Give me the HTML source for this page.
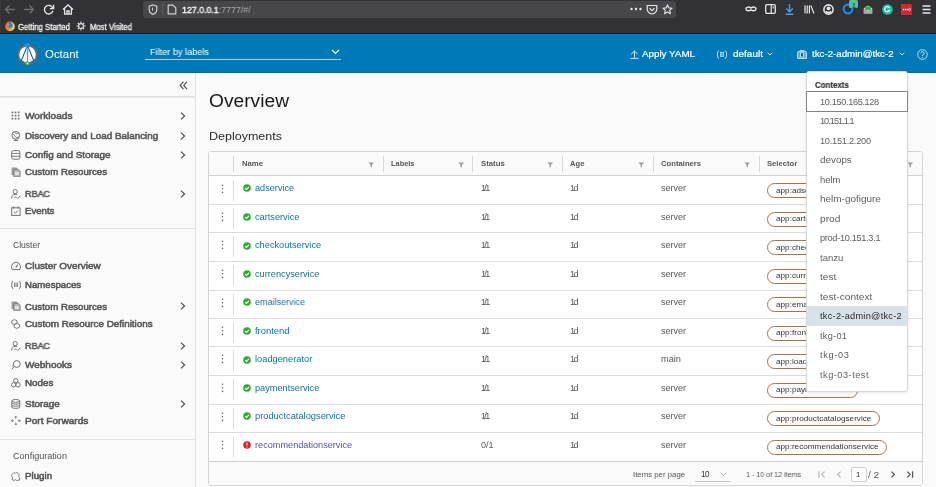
<!DOCTYPE html>
<html><head><meta charset="utf-8"><title>Octant</title>
<style>
html,body{margin:0;padding:0;}
body{width:936px;height:487px;overflow:hidden;position:relative;background:#fafafa;font-family:"Liberation Sans",sans-serif;}
.r{position:absolute;display:block;}
.t{position:absolute;white-space:nowrap;will-change:transform;}
</style></head><body>
<div class="r" style="left:0px;top:0px;width:936px;height:33px;background:#323234"></div>
<div class="r" style="left:0px;top:33px;width:936px;height:1px;background:#1c1b1f"></div>
<div class="r" style="left:0px;top:0px;width:1px;height:33px;background:#3b3b3d"></div>
<div class="r" style="left:143px;top:1px;width:533px;height:17px;background:#474749;border-radius:3px"></div>
<svg class="r" style="left:4px;top:4px;" width="12" height="11" viewBox="0 0 12 11"><path d="M11 5.5H1.5M5.5 1.5L1.5 5.5L5.5 9.5" fill="none" stroke="#6e6e70" stroke-width="1.3"/></svg>
<svg class="r" style="left:23px;top:4px;" width="12" height="11" viewBox="0 0 12 11"><path d="M1 5.5H10.5M6.5 1.5L10.5 5.5L6.5 9.5" fill="none" stroke="#6e6e70" stroke-width="1.3"/></svg>
<svg class="r" style="left:43px;top:4px;" width="12" height="11" viewBox="0 0 12 11"><path d="M9.8 4.2A4.3 4.3 0 1 0 9.9 6.8" fill="none" stroke="#e6e6e6" stroke-width="1.4"/><path d="M10.6 0.8V4.6H6.8" fill="none" stroke="#e6e6e6" stroke-width="1.4"/></svg>
<svg class="r" style="left:62px;top:4px;" width="12" height="11" viewBox="0 0 12 11"><path d="M1 5.6L6 1L11 5.6M2.6 4.3V10.2H9.4V4.3M5 10.2V7H7V10.2" fill="none" stroke="#e6e6e6" stroke-width="1.3"/></svg>
<svg class="r" style="left:148px;top:4px;" width="10" height="11" viewBox="0 0 10 11"><path d="M5 1L8.8 2.2V5.5C8.8 8 7 9.6 5 10.4C3 9.6 1.2 8 1.2 5.5V2.2Z" fill="none" stroke="#cfcfd0" stroke-width="1.2"/><path d="M5 3.2L4 4V6.4L5 6.8Z" fill="#cfcfd0"/></svg>
<div class="r" style="left:162px;top:3px;width:1px;height:12px;background:#5d5d60"></div>
<svg class="r" style="left:167px;top:4px;" width="10" height="11" viewBox="0 0 10 11"><path d="M1.2 1.2H6L8.8 4V9.8H1.2Z" fill="none" stroke="#cfcfd0" stroke-width="1.2" stroke-linejoin="round"/></svg>
<div class="t " style="left:181.50px;top:6.38px;font-size:9.0px;line-height:9.0px;color:#565656;transform:scaleX(0.9800);transform-origin:0 0;"><span style="color:#f9f9fa;-webkit-text-stroke:0.35px #f9f9fa">127.0.0.1</span><span style="color:#a8a8aa">:7777/#/</span></div>
<svg class="r" style="left:630px;top:7px;" width="12" height="4" viewBox="0 0 12 4"><circle cx="1.5" cy="2" r="1.2" fill="#e6e6e6"/><circle cx="6" cy="2" r="1.2" fill="#e6e6e6"/><circle cx="10.5" cy="2" r="1.2" fill="#e6e6e6"/></svg>
<svg class="r" style="left:646px;top:4px;" width="12" height="11" viewBox="0 0 12 11"><path d="M1.2 1.5H10.8V5A4.8 4.8 0 0 1 1.2 5Z" fill="none" stroke="#e6e6e6" stroke-width="1.2"/><path d="M3.6 4.3L6 6.6L8.4 4.3" fill="none" stroke="#e6e6e6" stroke-width="1.2"/></svg>
<svg class="r" style="left:662px;top:4px;" width="11" height="11" viewBox="0 0 11 11"><path d="M5.5 0.9L6.9 3.9L10.1 4.2L7.7 6.4L8.4 9.7L5.5 8L2.6 9.7L3.3 6.4L0.9 4.2L4.1 3.9Z" fill="none" stroke="#e6e6e6" stroke-width="1.1" stroke-linejoin="round"/></svg>
<svg class="r" style="left:745px;top:6px;" width="12" height="6" viewBox="0 0 12 6"><path d="M1 2.8C1 0.8 4 0.6 6 2C8 0.6 11 0.8 11 2.8C11 5 8 5.2 6 3.8C4 5.2 1 5 1 2.8Z" fill="none" stroke="#e6e6e6" stroke-width="1.5"/></svg>
<svg class="r" style="left:765px;top:4px;" width="11" height="10" viewBox="0 0 11 10"><rect x="0.7" y="0.7" width="9.6" height="8.6" rx="1.2" fill="none" stroke="#e6e6e6" stroke-width="1.3"/><path d="M6.2 0.7V9.3" stroke="#e6e6e6" stroke-width="1.2"/><path d="M8.2 2.2V4.6" stroke="#e6e6e6" stroke-width="1"/></svg>
<svg class="r" style="left:785px;top:4px;" width="9" height="11" viewBox="0 0 9 11"><path d="M4.5 0.3V7.6M1.2 4.4L4.5 7.7L7.8 4.4M0.5 10.2H8.5" fill="none" stroke="#38a3ff" stroke-width="1.4"/></svg>
<svg class="r" style="left:804px;top:5px;" width="11" height="9" viewBox="0 0 11 9"><path d="M1 0.5V8.5M3.2 0.5V8.5M5.4 0.5V8.5M6.8 0.6L10 8.5" fill="none" stroke="#e6e6e6" stroke-width="1.2"/></svg>
<svg class="r" style="left:823px;top:4px;" width="11" height="11" viewBox="0 0 11 11"><circle cx="5.5" cy="5.5" r="4.6" fill="none" stroke="#e6e6e6" stroke-width="1.6"/><circle cx="5.5" cy="4.3" r="1.9" fill="#e6e6e6"/><path d="M2.8 7.2C4 8.8 7 8.8 8.2 7.2" fill="none" stroke="#e6e6e6" stroke-width="1.5"/></svg>
<svg class="r" style="left:842px;top:3px;" width="12" height="12" viewBox="0 0 12 12"><circle cx="6" cy="6" r="4.4" fill="none" stroke="#1a8ae6" stroke-width="2.2"/></svg>
<div class="r" style="left:849px;top:0px;width:9px;height:8px;background:#54bf9e;border-radius:1.5px"></div>
<div class="t " style="left:852.00px;top:1.67px;font-size:7px;line-height:7px;color:#1f5c4c;font-weight:700;">1</div>
<svg class="r" style="left:863px;top:4px;" width="10" height="10" viewBox="0 0 10 10"><path d="M0.8 4.2L5 1.5L9.2 4.2V9.5H0.8Z" fill="#cfcfd0"/><path d="M2.2 2.5H7.8V6.2H2.2Z" fill="#2fb24b"/><path d="M0.8 5L5 7.6L9.2 5V9.5H0.8Z" fill="#a9a9ab"/></svg>
<svg class="r" style="left:882px;top:4px;" width="11" height="11" viewBox="0 0 11 11"><circle cx="5.5" cy="5.5" r="5.3" fill="#15c39a"/><path d="M7.4 3.8A2.6 2.6 0 1 0 7.6 6.4H5.8" fill="none" stroke="#ffffff" stroke-width="1.2"/></svg>
<div class="r" style="left:901px;top:4px;width:11px;height:11px;background:#d7262b;border-radius:1px"></div>
<svg class="r" style="left:902px;top:7px;" width="9" height="5" viewBox="0 0 9 5"><rect x="0.8" y="1.8" width="1.5" height="1.5" fill="#fff"/><rect x="3" y="1.8" width="1.5" height="1.5" fill="#fff"/><rect x="5.2" y="1.8" width="1.5" height="1.5" fill="#fff"/><path d="M7.6 0.8C8.3 1.6 8.3 3.4 7.6 4.2" stroke="#fff" stroke-width="0.8" fill="none"/></svg>
<svg class="r" style="left:922px;top:5px;" width="9" height="9" viewBox="0 0 9 9"><path d="M0.5 1H8.5M0.5 4.5H8.5M0.5 8H8.5" stroke="#e6e6e6" stroke-width="1.3"/></svg>
<svg class="r" style="left:5px;top:21px;" width="10" height="11" viewBox="0 0 10 11"><defs><linearGradient id="ffg" x1="0" y1="0" x2="1" y2="0.3"><stop offset="0" stop-color="#ff3a2a"/><stop offset="0.55" stop-color="#ff8a1a"/><stop offset="1" stop-color="#ffe226"/></linearGradient></defs><circle cx="4.9" cy="5.4" r="4.9" fill="url(#ffg)"/><circle cx="5.2" cy="4.6" r="2.6" fill="#1d8cf0"/><path d="M2 3.2C2.8 2.4 4 2.6 4.4 3.6C3.6 3.8 3.2 4.6 3.8 5.4C2.6 5.4 1.8 4.4 2 3.2Z" fill="#ff8a1a"/><path d="M3.6 1C4.6 0.2 6 0.4 6.6 0.8L5.4 2.2Z" fill="#1a6ef0"/></svg>
<div class="t " style="left:17.80px;top:24.06px;font-size:8.2px;line-height:8.2px;color:#f0f0f0;-webkit-text-stroke:0.3px #f0f0f0;transform:scaleX(0.9407);transform-origin:0 0;">Getting Started</div>
<svg class="r" style="left:76px;top:21px;" width="10" height="10" viewBox="0 0 10 10"><circle cx="5" cy="5" r="2.4" fill="none" stroke="#e6e6e6" stroke-width="1.1"/><path d="M5 0.5V2.2M5 7.8V9.5M0.5 5H2.2M7.8 5H9.5M1.8 1.8L3 3M7 7L8.2 8.2M1.8 8.2L3 7M7 3L8.2 1.8" stroke="#e6e6e6" stroke-width="1.1"/></svg>
<div class="t " style="left:89.70px;top:24.06px;font-size:8.2px;line-height:8.2px;color:#f0f0f0;-webkit-text-stroke:0.3px #f0f0f0;transform:scaleX(0.9429);transform-origin:0 0;">Most Visited</div>
<div class="r" style="left:0px;top:34px;width:936px;height:38px;background:#0079b8"></div>
<div class="r" style="left:0px;top:72px;width:936px;height:1px;background:#0069a5"></div>
<div class="r" style="left:0px;top:73px;width:936px;height:1px;background:#ffffff"></div>
<svg class="r" style="left:17px;top:43px;" width="22" height="23" viewBox="0 0 22 23"><circle cx="10.5" cy="11.7" r="9.2" fill="#ffffff" stroke="#6e6a68" stroke-width="1.9"/><path d="M10.5 2.5V20.3" stroke="#2aa0ea" stroke-width="1.1"/><path d="M10.5 2.5L4.3 17.6M10.5 2.5L16.7 17.6M4.3 17.6Q10.5 22.6 16.7 17.6" fill="none" stroke="#1d4fa7" stroke-width="1.1"/><path d="M10.5 2.5L7.6 19.8M10.5 2.5L13.4 19.8" fill="none" stroke="#b9d3ec" stroke-width="0.5"/><circle cx="10.5" cy="2.6" r="2.6" fill="#1e9be8"/><circle cx="10.5" cy="2.6" r="1.1" fill="#3c9a2a"/><circle cx="10.5" cy="20.3" r="2.1" fill="#3fbf2b"/><circle cx="10.5" cy="20.3" r="0.9" fill="#ffffff"/></svg>
<div class="t " style="left:45.30px;top:48.79px;font-size:11.0px;line-height:11.0px;color:#ffffff;transform:scaleX(1.0389);transform-origin:0 0;">Octant</div>
<div class="t " style="left:149.50px;top:47.27px;font-size:9.6px;line-height:9.6px;color:#ffffff;transform:scaleX(0.9531);transform-origin:0 0;">Filter by labels</div>
<div class="r" style="left:145px;top:59px;width:196px;height:1px;background:#a9d3ee"></div>
<svg class="r" style="left:331px;top:49px;" width="9" height="6" viewBox="0 0 9 6"><path d="M1 1L4.5 4.5L8 1" fill="none" stroke="#ffffff" stroke-width="1.2"/></svg>
<svg class="r" style="left:630px;top:50px;" width="9" height="10" viewBox="0 0 9 10"><path d="M4.5 7.8V1M1.2 4.2L4.5 1L7.8 4.2M0.5 8.4H8.5" fill="none" stroke="#d5e9f5" stroke-width="1"/></svg>
<div class="t " style="left:642.20px;top:50.11px;font-size:9.2px;line-height:9.2px;color:#ffffff;-webkit-text-stroke:0.2px #fff;transform:scaleX(1.0667);transform-origin:0 0;">Apply YAML</div>
<svg class="r" style="left:716px;top:50px;" width="12" height="10" viewBox="0 0 12 10"><path d="M2.6 0.6C1 2.4 1 6.8 2.6 8.6M9.4 0.6C11 2.4 11 6.8 9.4 8.6" fill="none" stroke="#cfe6f4" stroke-width="1"/><rect x="4" y="2" width="4" height="4.8" fill="#cfe6f4"/><path d="M4 3.6H8M4 5.2H8M6 2V6.8" stroke="#0079b8" stroke-width="0.55"/></svg>
<div class="t " style="left:732.80px;top:50.11px;font-size:9.2px;line-height:9.2px;color:#ffffff;-webkit-text-stroke:0.2px #fff;transform:scaleX(1.0842);transform-origin:0 0;">default</div>
<svg class="r" style="left:767px;top:52px;" width="6" height="4" viewBox="0 0 6 4"><path d="M0.7 0.8L3 3L5.3 0.8" fill="none" stroke="#ffffff" stroke-width="0.9"/></svg>
<svg class="r" style="left:797px;top:50px;" width="10" height="9" viewBox="0 0 10 9"><path d="M0.6 8.4V2.8Q0.6 1.2 2.2 1.2H7.8Q9.4 1.2 9.4 2.8V8.4Z" fill="#5fa8d3" stroke="#cfe6f4" stroke-width="1"/><path d="M3.4 1.2V0.5H6.6V1.2" fill="none" stroke="#cfe6f4" stroke-width="0.9"/><rect x="3.6" y="2.8" width="2.8" height="4.2" fill="#0a6aa3" stroke="#cfe6f4" stroke-width="0.8"/></svg>
<div class="t " style="left:812.40px;top:50.11px;font-size:9.2px;line-height:9.2px;color:#ffffff;-webkit-text-stroke:0.2px #fff;transform:scaleX(1.0565);transform-origin:0 0;">tkc-2-admin@tkc-2</div>
<svg class="r" style="left:899px;top:52px;" width="6" height="4" viewBox="0 0 6 4"><path d="M0.7 0.8L3 3L5.3 0.8" fill="none" stroke="#ffffff" stroke-width="0.9"/></svg>
<svg class="r" style="left:917px;top:49px;" width="11" height="11" viewBox="0 0 11 11"><circle cx="5.5" cy="5.5" r="4.8" fill="none" stroke="#d5e9f5" stroke-width="0.9"/><path d="M3.9 4.3A1.6 1.6 0 1 1 5.5 5.9V6.9" fill="none" stroke="#d5e9f5" stroke-width="0.9"/><circle cx="5.5" cy="8.3" r="0.55" fill="#d5e9f5"/></svg>
<div class="r" style="left:0px;top:74px;width:195px;height:413px;background:#fafafa"></div>
<div class="r" style="left:195px;top:74px;width:1px;height:413px;background:#e0e0e0"></div>
<div class="r" style="left:0px;top:96px;width:195px;height:1px;background:#dedede"></div>
<div class="r" style="left:0px;top:97px;width:195px;height:1px;background:#ececec"></div>
<svg class="r" style="left:179px;top:81px;" width="9" height="9" viewBox="0 0 9 9"><path d="M4.4 0.7L1.2 4.4L4.4 8.1M8 0.7L4.8 4.4L8 8.1" fill="none" stroke="#4a4a4a" stroke-width="1.15"/></svg>
<svg class="r" style="left:11px;top:111px;" width="10" height="10" viewBox="0 0 10 10"><rect x="0.6" y="0.6" width="1.7" height="1.7" fill="#727272"/><rect x="0.6" y="3.7" width="1.7" height="1.7" fill="#727272"/><rect x="0.6" y="6.8" width="1.7" height="1.7" fill="#727272"/><rect x="3.7" y="0.6" width="1.7" height="1.7" fill="#727272"/><rect x="3.7" y="3.7" width="1.7" height="1.7" fill="#727272"/><rect x="3.7" y="6.8" width="1.7" height="1.7" fill="#727272"/><rect x="6.8" y="0.6" width="1.7" height="1.7" fill="#727272"/><rect x="6.8" y="3.7" width="1.7" height="1.7" fill="#727272"/><rect x="6.8" y="6.8" width="1.7" height="1.7" fill="#727272"/></svg>
<div class="t " style="left:24.80px;top:112.03px;font-size:9.3px;line-height:9.3px;color:#575757;-webkit-text-stroke:0.55px #575757;transform:scaleX(1.0853);transform-origin:0 0;">Workloads</div>
<svg class="r" style="left:180px;top:112px;" width="6" height="8" viewBox="0 0 6 8"><path d="M1 0.7L4.6 4L1 7.3" fill="none" stroke="#4a4a4a" stroke-width="1.1"/></svg>
<svg class="r" style="left:11px;top:131px;" width="10" height="10" viewBox="0 0 10 10"><circle cx="4.8" cy="4.3" r="3.9" fill="none" stroke="#727272" stroke-width="1"/><path d="M1.6 2.6C3 3.6 3.6 4.6 4.4 5.8C5.2 6.8 6.6 6.9 8.4 5.6M3.4 1C4 2.2 5.6 3.2 7.8 2.4" fill="none" stroke="#727272" stroke-width="0.9"/><path d="M2.5 9.4H7.1M4.8 8.2V9.4" stroke="#727272" stroke-width="1"/></svg>
<div class="t " style="left:24.80px;top:131.73px;font-size:9.3px;line-height:9.3px;color:#575757;-webkit-text-stroke:0.55px #575757;transform:scaleX(1.0611);transform-origin:0 0;">Discovery and Load Balancing</div>
<svg class="r" style="left:180px;top:132px;" width="6" height="8" viewBox="0 0 6 8"><path d="M1 0.7L4.6 4L1 7.3" fill="none" stroke="#4a4a4a" stroke-width="1.1"/></svg>
<svg class="r" style="left:11px;top:150px;" width="10" height="10" viewBox="0 0 10 10"><rect x="0.7" y="0.6" width="8.2" height="8.6" rx="1.8" fill="none" stroke="#727272" stroke-width="1"/><path d="M0.7 3.4H8.9M0.7 6.3H8.9" stroke="#727272" stroke-width="0.9"/></svg>
<div class="t " style="left:24.80px;top:150.93px;font-size:9.3px;line-height:9.3px;color:#575757;-webkit-text-stroke:0.55px #575757;transform:scaleX(1.0673);transform-origin:0 0;">Config and Storage</div>
<svg class="r" style="left:180px;top:151px;" width="6" height="8" viewBox="0 0 6 8"><path d="M1 0.7L4.6 4L1 7.3" fill="none" stroke="#4a4a4a" stroke-width="1.1"/></svg>
<svg class="r" style="left:11px;top:167px;" width="10" height="10" viewBox="0 0 10 10"><path d="M0.6 0.6H5.4L6.8 2V8H0.6Z" fill="#9a9a9a"/><path d="M2.6 2.4H7.4L9.2 4.2V9.6H2.6Z" fill="#b4b4b4" stroke="#727272" stroke-width="0.7"/><rect x="4" y="5" width="3.8" height="3" fill="#e2e2e2"/></svg>
<div class="t " style="left:24.80px;top:168.33px;font-size:9.3px;line-height:9.3px;color:#575757;-webkit-text-stroke:0.55px #575757;transform:scaleX(1.0380);transform-origin:0 0;">Custom Resources</div>
<svg class="r" style="left:11px;top:189px;" width="10" height="10" viewBox="0 0 10 10"><circle cx="4.2" cy="2.6" r="2.1" fill="none" stroke="#727272" stroke-width="1"/><path d="M0.6 9.4C0.6 6.6 2.3 5.4 4.2 5.4C5 5.4 5.7 5.6 6.2 6" fill="none" stroke="#727272" stroke-width="1"/><path d="M3.2 9.2C3.8 7.6 5 7.6 5.6 8.6C6.2 9.6 7.4 9.6 8 8L9.4 6.8" fill="none" stroke="#727272" stroke-width="0.9"/></svg>
<div class="t " style="left:24.80px;top:189.93px;font-size:9.3px;line-height:9.3px;color:#575757;-webkit-text-stroke:0.55px #575757;transform:scaleX(0.9712);transform-origin:0 0;">RBAC</div>
<svg class="r" style="left:180px;top:190px;" width="6" height="8" viewBox="0 0 6 8"><path d="M1 0.7L4.6 4L1 7.3" fill="none" stroke="#4a4a4a" stroke-width="1.1"/></svg>
<svg class="r" style="left:11px;top:206px;" width="10" height="10" viewBox="0 0 10 10"><rect x="0.7" y="1.8" width="8.4" height="7.6" fill="none" stroke="#727272" stroke-width="1"/><path d="M2.8 0.3V2.8M7 0.3V2.8M3 5.8L4.4 7.2L6.9 4.6" fill="none" stroke="#727272" stroke-width="1"/></svg>
<div class="t " style="left:24.80px;top:207.43px;font-size:9.3px;line-height:9.3px;color:#575757;-webkit-text-stroke:0.55px #575757;transform:scaleX(1.0338);transform-origin:0 0;">Events</div>
<svg class="r" style="left:11px;top:261px;" width="10" height="10" viewBox="0 0 10 10"><path d="M1.3 8.6A4.6 4.6 0 1 1 8.7 8.6Z" fill="none" stroke="#727272" stroke-width="1"/><path d="M4.8 6.4L6.8 3.6" stroke="#727272" stroke-width="1.1"/></svg>
<div class="t " style="left:24.80px;top:262.03px;font-size:9.3px;line-height:9.3px;color:#575757;-webkit-text-stroke:0.55px #575757;transform:scaleX(1.0693);transform-origin:0 0;">Cluster Overview</div>
<svg class="r" style="left:11px;top:280px;" width="10" height="10" viewBox="0 0 10 10"><path d="M1.8 0.8C0.3 2.6 0.3 7 1.8 8.8M8.4 0.8C9.9 2.6 9.9 7 8.4 8.8" fill="none" stroke="#727272" stroke-width="1"/><path d="M3.6 2.6V7M5.1 2.6V7M6.6 2.6V7" stroke="#727272" stroke-width="0.9"/></svg>
<div class="t " style="left:24.80px;top:281.23px;font-size:9.3px;line-height:9.3px;color:#575757;-webkit-text-stroke:0.55px #575757;transform:scaleX(1.0351);transform-origin:0 0;">Namespaces</div>
<svg class="r" style="left:11px;top:301px;" width="10" height="10" viewBox="0 0 10 10"><path d="M0.6 0.6H5.4L6.8 2V8H0.6Z" fill="#9a9a9a"/><path d="M2.6 2.4H7.4L9.2 4.2V9.6H2.6Z" fill="#b4b4b4" stroke="#727272" stroke-width="0.7"/><rect x="4" y="5" width="3.8" height="3" fill="#e2e2e2"/></svg>
<div class="t " style="left:24.80px;top:302.53px;font-size:9.3px;line-height:9.3px;color:#575757;-webkit-text-stroke:0.55px #575757;transform:scaleX(1.0380);transform-origin:0 0;">Custom Resources</div>
<svg class="r" style="left:180px;top:302px;" width="6" height="8" viewBox="0 0 6 8"><path d="M1 0.7L4.6 4L1 7.3" fill="none" stroke="#4a4a4a" stroke-width="1.1"/></svg>
<svg class="r" style="left:11px;top:319px;" width="10" height="10" viewBox="0 0 10 10"><path d="M3.4 0.6L6 1.8V4.4L3.4 5.6L0.8 4.4V1.8Z" fill="none" stroke="#727272" stroke-width="0.9"/><path d="M5.8 4.4L8.6 5.6V8.2L5.8 9.4L3.2 8.2V5.6Z" fill="none" stroke="#727272" stroke-width="0.9"/></svg>
<div class="t " style="left:24.80px;top:319.93px;font-size:9.3px;line-height:9.3px;color:#575757;-webkit-text-stroke:0.55px #575757;transform:scaleX(1.0604);transform-origin:0 0;">Custom Resource Definitions</div>
<svg class="r" style="left:11px;top:341px;" width="10" height="10" viewBox="0 0 10 10"><circle cx="4.2" cy="2.6" r="2.1" fill="none" stroke="#727272" stroke-width="1"/><path d="M0.6 9.4C0.6 6.6 2.3 5.4 4.2 5.4C5 5.4 5.7 5.6 6.2 6" fill="none" stroke="#727272" stroke-width="1"/><path d="M3.2 9.2C3.8 7.6 5 7.6 5.6 8.6C6.2 9.6 7.4 9.6 8 8L9.4 6.8" fill="none" stroke="#727272" stroke-width="0.9"/></svg>
<div class="t " style="left:24.80px;top:342.03px;font-size:9.3px;line-height:9.3px;color:#575757;-webkit-text-stroke:0.55px #575757;transform:scaleX(0.9712);transform-origin:0 0;">RBAC</div>
<svg class="r" style="left:180px;top:342px;" width="6" height="8" viewBox="0 0 6 8"><path d="M1 0.7L4.6 4L1 7.3" fill="none" stroke="#4a4a4a" stroke-width="1.1"/></svg>
<svg class="r" style="left:11px;top:360px;" width="10" height="10" viewBox="0 0 10 10"><circle cx="5.8" cy="4" r="3.4" fill="none" stroke="#727272" stroke-width="1"/><path d="M3.4 6.4L0.8 9.4M2.6 5L1.2 6.6" fill="none" stroke="#727272" stroke-width="1"/></svg>
<div class="t " style="left:24.80px;top:361.23px;font-size:9.3px;line-height:9.3px;color:#575757;-webkit-text-stroke:0.55px #575757;transform:scaleX(1.0735);transform-origin:0 0;">Webhooks</div>
<svg class="r" style="left:180px;top:361px;" width="6" height="8" viewBox="0 0 6 8"><path d="M1 0.7L4.6 4L1 7.3" fill="none" stroke="#4a4a4a" stroke-width="1.1"/></svg>
<svg class="r" style="left:11px;top:378px;" width="10" height="10" viewBox="0 0 10 10"><circle cx="4.8" cy="2.7" r="2.2" fill="none" stroke="#727272" stroke-width="1"/><circle cx="2.6" cy="6.8" r="2.2" fill="none" stroke="#727272" stroke-width="1"/><circle cx="7" cy="6.8" r="2.2" fill="none" stroke="#727272" stroke-width="1"/></svg>
<div class="t " style="left:24.80px;top:378.93px;font-size:9.3px;line-height:9.3px;color:#575757;-webkit-text-stroke:0.55px #575757;transform:scaleX(1.0561);transform-origin:0 0;">Nodes</div>
<svg class="r" style="left:11px;top:399px;" width="10" height="10" viewBox="0 0 10 10"><ellipse cx="4.8" cy="1.9" rx="4" ry="1.4" fill="none" stroke="#727272" stroke-width="1"/><path d="M0.8 1.9V8.2C0.8 9.7 8.8 9.7 8.8 8.2V1.9M0.8 4C0.8 5.5 8.8 5.5 8.8 4M0.8 6.1C0.8 7.6 8.8 7.6 8.8 6.1" fill="none" stroke="#727272" stroke-width="1"/></svg>
<div class="t " style="left:24.80px;top:400.33px;font-size:9.3px;line-height:9.3px;color:#575757;-webkit-text-stroke:0.55px #575757;transform:scaleX(1.0718);transform-origin:0 0;">Storage</div>
<svg class="r" style="left:180px;top:400px;" width="6" height="8" viewBox="0 0 6 8"><path d="M1 0.7L4.6 4L1 7.3" fill="none" stroke="#4a4a4a" stroke-width="1.1"/></svg>
<svg class="r" style="left:11px;top:416px;" width="10" height="10" viewBox="0 0 10 10"><path d="M4.8 0.4V2.8M4.8 6.6V9M0.4 4.7H2.8M6.8 4.7H9.2M3.6 1.6L4.8 0.4L6 1.6M3.6 7.8L4.8 9L6 7.8M1.6 3.5L0.4 4.7L1.6 5.9M8 3.5L9.2 4.7L8 5.9" fill="none" stroke="#727272" stroke-width="0.9"/></svg>
<div class="t " style="left:24.80px;top:417.33px;font-size:9.3px;line-height:9.3px;color:#575757;-webkit-text-stroke:0.55px #575757;transform:scaleX(1.0844);transform-origin:0 0;">Port Forwards</div>
<svg class="r" style="left:11px;top:471px;" width="10" height="10" viewBox="0 0 10 10"><path d="M1 3.6L3.2 1.4L4.4 2.4C5 1.2 6.6 1.2 7 2.4L8.4 3.8C7.4 4.6 7.4 5.8 8.4 6.6L9 8.8L5.6 9.6C5.4 8.4 3.8 8.4 3.4 9.4L1.2 8.8L1.6 6.4C0.4 6 0.4 4.4 1 3.6Z" fill="none" stroke="#727272" stroke-width="0.9"/></svg>
<div class="t " style="left:24.80px;top:472.33px;font-size:9.3px;line-height:9.3px;color:#575757;-webkit-text-stroke:0.55px #575757;transform:scaleX(1.0486);transform-origin:0 0;">Plugin</div>
<div class="r" style="left:0px;top:228px;width:195px;height:1px;background:#e3e3e3"></div>
<div class="t " style="left:13.10px;top:241.47px;font-size:8.3px;line-height:8.3px;color:#505050;transform:scaleX(1.0312);transform-origin:0 0;">Cluster</div>
<div class="r" style="left:0px;top:439px;width:195px;height:1px;background:#e3e3e3"></div>
<div class="t " style="left:13.10px;top:451.87px;font-size:8.3px;line-height:8.3px;color:#505050;transform:scaleX(1.0927);transform-origin:0 0;">Configuration</div>
<div class="t " style="left:208.90px;top:93.00px;font-size:17.6px;line-height:17.6px;color:#1a1a1a;transform:scaleX(1.0912);transform-origin:0 0;">Overview</div>
<div class="t " style="left:208.90px;top:130.61px;font-size:11.8px;line-height:11.8px;color:#2a2a2a;transform:scaleX(1.0599);transform-origin:0 0;">Deployments</div>
<div class="r" style="left:208px;top:151px;width:715px;height:335px;background:#ffffff;border:1px solid #d4d4d4;border-radius:3px;box-sizing:border-box"></div>
<div class="r" style="left:209px;top:152px;width:713px;height:23px;background:#fafafa"></div>
<div class="r" style="left:209px;top:175px;width:713px;height:1px;background:#d0d0d0"></div>
<div class="r" style="left:233px;top:156px;width:1px;height:16px;background:#d9d9d9"></div>
<div class="r" style="left:383px;top:156px;width:1px;height:16px;background:#d9d9d9"></div>
<div class="r" style="left:472px;top:156px;width:1px;height:16px;background:#d9d9d9"></div>
<div class="r" style="left:562px;top:156px;width:1px;height:16px;background:#d9d9d9"></div>
<div class="r" style="left:653px;top:156px;width:1px;height:16px;background:#d9d9d9"></div>
<div class="r" style="left:759px;top:156px;width:1px;height:16px;background:#d9d9d9"></div>
<div class="t " style="left:241.90px;top:160.22px;font-size:7.3px;line-height:7.3px;color:#565656;font-weight:700;transform:scaleX(1.0566);transform-origin:0 0;">Name</div>
<svg class="r" style="left:368px;top:162px;" width="7" height="6" viewBox="0 0 7 6"><path d="M0.3 0.4H6.2L3.9 2.8V5.2H2.6V2.8Z" fill="#9a9a9a"/></svg>
<div class="t " style="left:391.40px;top:160.22px;font-size:7.3px;line-height:7.3px;color:#565656;font-weight:700;transform:scaleX(1.0162);transform-origin:0 0;">Labels</div>
<svg class="r" style="left:458px;top:162px;" width="7" height="6" viewBox="0 0 7 6"><path d="M0.3 0.4H6.2L3.9 2.8V5.2H2.6V2.8Z" fill="#9a9a9a"/></svg>
<div class="t " style="left:480.60px;top:160.22px;font-size:7.3px;line-height:7.3px;color:#565656;font-weight:700;transform:scaleX(1.0622);transform-origin:0 0;">Status</div>
<svg class="r" style="left:547px;top:162px;" width="7" height="6" viewBox="0 0 7 6"><path d="M0.3 0.4H6.2L3.9 2.8V5.2H2.6V2.8Z" fill="#9a9a9a"/></svg>
<div class="t " style="left:570.00px;top:160.22px;font-size:7.3px;line-height:7.3px;color:#565656;font-weight:700;transform:scaleX(1.0449);transform-origin:0 0;">Age</div>
<svg class="r" style="left:638px;top:162px;" width="7" height="6" viewBox="0 0 7 6"><path d="M0.3 0.4H6.2L3.9 2.8V5.2H2.6V2.8Z" fill="#9a9a9a"/></svg>
<div class="t " style="left:660.70px;top:160.22px;font-size:7.3px;line-height:7.3px;color:#565656;font-weight:700;transform:scaleX(1.0518);transform-origin:0 0;">Containers</div>
<svg class="r" style="left:744px;top:162px;" width="7" height="6" viewBox="0 0 7 6"><path d="M0.3 0.4H6.2L3.9 2.8V5.2H2.6V2.8Z" fill="#9a9a9a"/></svg>
<div class="t " style="left:766.80px;top:160.22px;font-size:7.3px;line-height:7.3px;color:#565656;font-weight:700;transform:scaleX(1.0482);transform-origin:0 0;">Selector</div>
<svg class="r" style="left:907px;top:162px;" width="7" height="6" viewBox="0 0 7 6"><path d="M0.3 0.4H6.2L3.9 2.8V5.2H2.6V2.8Z" fill="#9a9a9a"/></svg>
<div class="r" style="left:233px;top:180px;width:1px;height:21px;background:#dcdcdc"></div>
<svg class="r" style="left:221px;top:184px;" width="3" height="10" viewBox="0 0 3 10"><circle cx="1.5" cy="1.2" r="0.8" fill="#666"/><circle cx="1.5" cy="4.8" r="0.8" fill="#666"/><circle cx="1.5" cy="8.4" r="0.8" fill="#666"/></svg>
<svg class="r" style="left:243px;top:184px;" width="8" height="8" viewBox="0 0 8 8"><circle cx="4" cy="4" r="3.8" fill="#2cae2c"/><path d="M2.2 4.1L3.5 5.4L5.9 2.8" fill="none" stroke="#fff" stroke-width="1.25"/></svg>
<div class="t " style="left:254.80px;top:184.10px;font-size:9.1px;line-height:9.1px;color:#0a72ad;transform:scaleX(1.0067);transform-origin:0 0;">adservice</div>
<div class="t " style="left:481.00px;top:184.18px;font-size:9.0px;line-height:9.0px;color:#565656;letter-spacing:-1.650px;">1/1</div>
<div class="t " style="left:569.50px;top:184.18px;font-size:9.0px;line-height:9.0px;color:#565656;letter-spacing:-1.400px;">1d</div>
<div class="t " style="left:661.20px;top:184.18px;font-size:9.0px;line-height:9.0px;color:#565656;transform:scaleX(1.0000);transform-origin:0 0;">server</div>
<div class="r" style="left:766.5px;top:183px;width:68.9px;height:14.5px;border:1px solid #a67250;border-radius:8px;box-sizing:border-box;background:#fff"></div>
<div class="t " style="left:775.60px;top:186.68px;font-size:7.7px;line-height:7.7px;color:#333333;transform:scaleX(1.0629);transform-origin:0 0;">app:adservice</div>
<div class="r" style="left:209px;top:204px;width:713px;height:1px;background:#dcdcdc"></div>
<div class="r" style="left:233px;top:208px;width:1px;height:21px;background:#dcdcdc"></div>
<svg class="r" style="left:221px;top:212px;" width="3" height="10" viewBox="0 0 3 10"><circle cx="1.5" cy="1.2" r="0.8" fill="#666"/><circle cx="1.5" cy="4.8" r="0.8" fill="#666"/><circle cx="1.5" cy="8.4" r="0.8" fill="#666"/></svg>
<svg class="r" style="left:243px;top:213px;" width="8" height="8" viewBox="0 0 8 8"><circle cx="4" cy="4" r="3.8" fill="#2cae2c"/><path d="M2.2 4.1L3.5 5.4L5.9 2.8" fill="none" stroke="#fff" stroke-width="1.25"/></svg>
<div class="t " style="left:254.80px;top:212.60px;font-size:9.1px;line-height:9.1px;color:#0a72ad;transform:scaleX(1.0117);transform-origin:0 0;">cartservice</div>
<div class="t " style="left:481.00px;top:212.68px;font-size:9.0px;line-height:9.0px;color:#565656;letter-spacing:-1.650px;">1/1</div>
<div class="t " style="left:569.50px;top:212.68px;font-size:9.0px;line-height:9.0px;color:#565656;letter-spacing:-1.400px;">1d</div>
<div class="t " style="left:661.20px;top:212.68px;font-size:9.0px;line-height:9.0px;color:#565656;transform:scaleX(1.0000);transform-origin:0 0;">server</div>
<div class="r" style="left:766.5px;top:212px;width:73.5px;height:14.5px;border:1px solid #a67250;border-radius:8px;box-sizing:border-box;background:#fff"></div>
<div class="t " style="left:775.60px;top:215.18px;font-size:7.7px;line-height:7.7px;color:#333333;transform:scaleX(1.0632);transform-origin:0 0;">app:cartservice</div>
<div class="r" style="left:209px;top:232px;width:713px;height:1px;background:#dcdcdc"></div>
<div class="r" style="left:233px;top:236px;width:1px;height:21px;background:#dcdcdc"></div>
<svg class="r" style="left:221px;top:240px;" width="3" height="10" viewBox="0 0 3 10"><circle cx="1.5" cy="1.2" r="0.8" fill="#666"/><circle cx="1.5" cy="4.8" r="0.8" fill="#666"/><circle cx="1.5" cy="8.4" r="0.8" fill="#666"/></svg>
<svg class="r" style="left:243px;top:242px;" width="8" height="8" viewBox="0 0 8 8"><circle cx="4" cy="4" r="3.8" fill="#2cae2c"/><path d="M2.2 4.1L3.5 5.4L5.9 2.8" fill="none" stroke="#fff" stroke-width="1.25"/></svg>
<div class="t " style="left:254.80px;top:241.10px;font-size:9.1px;line-height:9.1px;color:#0a72ad;transform:scaleX(1.0148);transform-origin:0 0;">checkoutservice</div>
<div class="t " style="left:481.00px;top:241.18px;font-size:9.0px;line-height:9.0px;color:#565656;letter-spacing:-1.650px;">1/1</div>
<div class="t " style="left:569.50px;top:241.18px;font-size:9.0px;line-height:9.0px;color:#565656;letter-spacing:-1.400px;">1d</div>
<div class="t " style="left:661.20px;top:241.18px;font-size:9.0px;line-height:9.0px;color:#565656;transform:scaleX(1.0000);transform-origin:0 0;">server</div>
<div class="r" style="left:766.5px;top:240px;width:92.6px;height:14.5px;border:1px solid #a67250;border-radius:8px;box-sizing:border-box;background:#fff"></div>
<div class="t " style="left:775.60px;top:243.68px;font-size:7.7px;line-height:7.7px;color:#333333;transform:scaleX(1.0633);transform-origin:0 0;">app:checkoutservice</div>
<div class="r" style="left:209px;top:261px;width:713px;height:1px;background:#dcdcdc"></div>
<div class="r" style="left:233px;top:265px;width:1px;height:21px;background:#dcdcdc"></div>
<svg class="r" style="left:221px;top:269px;" width="3" height="10" viewBox="0 0 3 10"><circle cx="1.5" cy="1.2" r="0.8" fill="#666"/><circle cx="1.5" cy="4.8" r="0.8" fill="#666"/><circle cx="1.5" cy="8.4" r="0.8" fill="#666"/></svg>
<svg class="r" style="left:243px;top:270px;" width="8" height="8" viewBox="0 0 8 8"><circle cx="4" cy="4" r="3.8" fill="#2cae2c"/><path d="M2.2 4.1L3.5 5.4L5.9 2.8" fill="none" stroke="#fff" stroke-width="1.25"/></svg>
<div class="t " style="left:254.80px;top:269.60px;font-size:9.1px;line-height:9.1px;color:#0a72ad;transform:scaleX(1.0109);transform-origin:0 0;">currencyservice</div>
<div class="t " style="left:481.00px;top:269.68px;font-size:9.0px;line-height:9.0px;color:#565656;letter-spacing:-1.650px;">1/1</div>
<div class="t " style="left:569.50px;top:269.68px;font-size:9.0px;line-height:9.0px;color:#565656;letter-spacing:-1.400px;">1d</div>
<div class="t " style="left:661.20px;top:269.68px;font-size:9.0px;line-height:9.0px;color:#565656;transform:scaleX(1.0000);transform-origin:0 0;">server</div>
<div class="r" style="left:766.5px;top:269px;width:91.2px;height:14.5px;border:1px solid #a67250;border-radius:8px;box-sizing:border-box;background:#fff"></div>
<div class="t " style="left:775.60px;top:272.18px;font-size:7.7px;line-height:7.7px;color:#333333;transform:scaleX(1.0631);transform-origin:0 0;">app:currencyservice</div>
<div class="r" style="left:209px;top:290px;width:713px;height:1px;background:#dcdcdc"></div>
<div class="r" style="left:233px;top:294px;width:1px;height:21px;background:#dcdcdc"></div>
<svg class="r" style="left:221px;top:298px;" width="3" height="10" viewBox="0 0 3 10"><circle cx="1.5" cy="1.2" r="0.8" fill="#666"/><circle cx="1.5" cy="4.8" r="0.8" fill="#666"/><circle cx="1.5" cy="8.4" r="0.8" fill="#666"/></svg>
<svg class="r" style="left:243px;top:298px;" width="8" height="8" viewBox="0 0 8 8"><circle cx="4" cy="4" r="3.8" fill="#2cae2c"/><path d="M2.2 4.1L3.5 5.4L5.9 2.8" fill="none" stroke="#fff" stroke-width="1.25"/></svg>
<div class="t " style="left:254.80px;top:298.10px;font-size:9.1px;line-height:9.1px;color:#0a72ad;transform:scaleX(0.9892);transform-origin:0 0;">emailservice</div>
<div class="t " style="left:481.00px;top:298.18px;font-size:9.0px;line-height:9.0px;color:#565656;letter-spacing:-1.650px;">1/1</div>
<div class="t " style="left:569.50px;top:298.18px;font-size:9.0px;line-height:9.0px;color:#565656;letter-spacing:-1.400px;">1d</div>
<div class="t " style="left:661.20px;top:298.18px;font-size:9.0px;line-height:9.0px;color:#565656;transform:scaleX(1.0000);transform-origin:0 0;">server</div>
<div class="r" style="left:766.5px;top:297px;width:79.4px;height:14.5px;border:1px solid #a67250;border-radius:8px;box-sizing:border-box;background:#fff"></div>
<div class="t " style="left:775.60px;top:300.68px;font-size:7.7px;line-height:7.7px;color:#333333;transform:scaleX(1.0631);transform-origin:0 0;">app:emailservice</div>
<div class="r" style="left:209px;top:318px;width:713px;height:1px;background:#dcdcdc"></div>
<div class="r" style="left:233px;top:322px;width:1px;height:21px;background:#dcdcdc"></div>
<svg class="r" style="left:221px;top:326px;" width="3" height="10" viewBox="0 0 3 10"><circle cx="1.5" cy="1.2" r="0.8" fill="#666"/><circle cx="1.5" cy="4.8" r="0.8" fill="#666"/><circle cx="1.5" cy="8.4" r="0.8" fill="#666"/></svg>
<svg class="r" style="left:243px;top:327px;" width="8" height="8" viewBox="0 0 8 8"><circle cx="4" cy="4" r="3.8" fill="#2cae2c"/><path d="M2.2 4.1L3.5 5.4L5.9 2.8" fill="none" stroke="#fff" stroke-width="1.25"/></svg>
<div class="t " style="left:254.80px;top:326.60px;font-size:9.1px;line-height:9.1px;color:#0a72ad;transform:scaleX(1.0357);transform-origin:0 0;">frontend</div>
<div class="t " style="left:481.00px;top:326.68px;font-size:9.0px;line-height:9.0px;color:#565656;letter-spacing:-1.650px;">1/1</div>
<div class="t " style="left:569.50px;top:326.68px;font-size:9.0px;line-height:9.0px;color:#565656;letter-spacing:-1.400px;">1d</div>
<div class="t " style="left:661.20px;top:326.68px;font-size:9.0px;line-height:9.0px;color:#565656;transform:scaleX(1.0000);transform-origin:0 0;">server</div>
<div class="r" style="left:766.5px;top:326px;width:63.9px;height:14.5px;border:1px solid #a67250;border-radius:8px;box-sizing:border-box;background:#fff"></div>
<div class="t " style="left:775.60px;top:329.18px;font-size:7.7px;line-height:7.7px;color:#333333;transform:scaleX(1.0625);transform-origin:0 0;">app:frontend</div>
<div class="r" style="left:209px;top:346px;width:713px;height:1px;background:#dcdcdc"></div>
<div class="r" style="left:233px;top:350px;width:1px;height:21px;background:#dcdcdc"></div>
<svg class="r" style="left:221px;top:354px;" width="3" height="10" viewBox="0 0 3 10"><circle cx="1.5" cy="1.2" r="0.8" fill="#666"/><circle cx="1.5" cy="4.8" r="0.8" fill="#666"/><circle cx="1.5" cy="8.4" r="0.8" fill="#666"/></svg>
<svg class="r" style="left:243px;top:356px;" width="8" height="8" viewBox="0 0 8 8"><circle cx="4" cy="4" r="3.8" fill="#2cae2c"/><path d="M2.2 4.1L3.5 5.4L5.9 2.8" fill="none" stroke="#fff" stroke-width="1.25"/></svg>
<div class="t " style="left:254.80px;top:355.10px;font-size:9.1px;line-height:9.1px;color:#0a72ad;transform:scaleX(1.0201);transform-origin:0 0;">loadgenerator</div>
<div class="t " style="left:481.00px;top:355.18px;font-size:9.0px;line-height:9.0px;color:#565656;letter-spacing:-1.650px;">1/1</div>
<div class="t " style="left:569.50px;top:355.18px;font-size:9.0px;line-height:9.0px;color:#565656;letter-spacing:-1.400px;">1d</div>
<div class="t " style="left:661.20px;top:355.18px;font-size:9.0px;line-height:9.0px;color:#565656;transform:scaleX(1.0256);transform-origin:0 0;">main</div>
<div class="r" style="left:766.5px;top:354px;width:84.4px;height:14.5px;border:1px solid #a67250;border-radius:8px;box-sizing:border-box;background:#fff"></div>
<div class="t " style="left:775.60px;top:357.68px;font-size:7.7px;line-height:7.7px;color:#333333;transform:scaleX(1.0623);transform-origin:0 0;">app:loadgenerator</div>
<div class="r" style="left:209px;top:375px;width:713px;height:1px;background:#dcdcdc"></div>
<div class="r" style="left:233px;top:379px;width:1px;height:21px;background:#dcdcdc"></div>
<svg class="r" style="left:221px;top:383px;" width="3" height="10" viewBox="0 0 3 10"><circle cx="1.5" cy="1.2" r="0.8" fill="#666"/><circle cx="1.5" cy="4.8" r="0.8" fill="#666"/><circle cx="1.5" cy="8.4" r="0.8" fill="#666"/></svg>
<svg class="r" style="left:243px;top:384px;" width="8" height="8" viewBox="0 0 8 8"><circle cx="4" cy="4" r="3.8" fill="#2cae2c"/><path d="M2.2 4.1L3.5 5.4L5.9 2.8" fill="none" stroke="#fff" stroke-width="1.25"/></svg>
<div class="t " style="left:254.80px;top:383.60px;font-size:9.1px;line-height:9.1px;color:#0a72ad;transform:scaleX(1.0091);transform-origin:0 0;">paymentservice</div>
<div class="t " style="left:481.00px;top:383.68px;font-size:9.0px;line-height:9.0px;color:#565656;letter-spacing:-1.650px;">1/1</div>
<div class="t " style="left:569.50px;top:383.68px;font-size:9.0px;line-height:9.0px;color:#565656;letter-spacing:-1.400px;">1d</div>
<div class="t " style="left:661.20px;top:383.68px;font-size:9.0px;line-height:9.0px;color:#565656;transform:scaleX(1.0000);transform-origin:0 0;">server</div>
<div class="r" style="left:766.5px;top:383px;width:91.2px;height:14.5px;border:1px solid #a67250;border-radius:8px;box-sizing:border-box;background:#fff"></div>
<div class="t " style="left:775.60px;top:386.18px;font-size:7.7px;line-height:7.7px;color:#333333;transform:scaleX(1.0631);transform-origin:0 0;">app:paymentservice</div>
<div class="r" style="left:209px;top:404px;width:713px;height:1px;background:#dcdcdc"></div>
<div class="r" style="left:233px;top:408px;width:1px;height:21px;background:#dcdcdc"></div>
<svg class="r" style="left:221px;top:412px;" width="3" height="10" viewBox="0 0 3 10"><circle cx="1.5" cy="1.2" r="0.8" fill="#666"/><circle cx="1.5" cy="4.8" r="0.8" fill="#666"/><circle cx="1.5" cy="8.4" r="0.8" fill="#666"/></svg>
<svg class="r" style="left:243px;top:412px;" width="8" height="8" viewBox="0 0 8 8"><circle cx="4" cy="4" r="3.8" fill="#2cae2c"/><path d="M2.2 4.1L3.5 5.4L5.9 2.8" fill="none" stroke="#fff" stroke-width="1.25"/></svg>
<div class="t " style="left:254.80px;top:412.10px;font-size:9.1px;line-height:9.1px;color:#0a72ad;transform:scaleX(1.0224);transform-origin:0 0;">productcatalogservice</div>
<div class="t " style="left:481.00px;top:412.18px;font-size:9.0px;line-height:9.0px;color:#565656;letter-spacing:-1.650px;">1/1</div>
<div class="t " style="left:569.50px;top:412.18px;font-size:9.0px;line-height:9.0px;color:#565656;letter-spacing:-1.400px;">1d</div>
<div class="t " style="left:661.20px;top:412.18px;font-size:9.0px;line-height:9.0px;color:#565656;transform:scaleX(1.0000);transform-origin:0 0;">server</div>
<div class="r" style="left:766.5px;top:411px;width:113.5px;height:14.5px;border:1px solid #a67250;border-radius:8px;box-sizing:border-box;background:#fff"></div>
<div class="t " style="left:775.60px;top:414.68px;font-size:7.7px;line-height:7.7px;color:#333333;transform:scaleX(1.0630);transform-origin:0 0;">app:productcatalogservice</div>
<div class="r" style="left:209px;top:432px;width:713px;height:1px;background:#dcdcdc"></div>
<div class="r" style="left:233px;top:436px;width:1px;height:21px;background:#dcdcdc"></div>
<svg class="r" style="left:221px;top:440px;" width="3" height="10" viewBox="0 0 3 10"><circle cx="1.5" cy="1.2" r="0.8" fill="#666"/><circle cx="1.5" cy="4.8" r="0.8" fill="#666"/><circle cx="1.5" cy="8.4" r="0.8" fill="#666"/></svg>
<svg class="r" style="left:243px;top:441px;" width="8" height="8" viewBox="0 0 8 8"><circle cx="4" cy="4" r="3.8" fill="#e62020"/><path d="M4 1.8V4.6" stroke="#fff" stroke-width="1.1"/><circle cx="4" cy="6" r="0.6" fill="#fff"/></svg>
<div class="t " style="left:254.80px;top:440.60px;font-size:9.1px;line-height:9.1px;color:#5552ae;transform:scaleX(1.0063);transform-origin:0 0;">recommendationservice</div>
<div class="t " style="left:481.00px;top:440.68px;font-size:9.0px;line-height:9.0px;color:#565656;letter-spacing:0.050px;">0/1</div>
<div class="t " style="left:569.50px;top:440.68px;font-size:9.0px;line-height:9.0px;color:#565656;letter-spacing:-1.400px;">1d</div>
<div class="t " style="left:661.20px;top:440.68px;font-size:9.0px;line-height:9.0px;color:#565656;transform:scaleX(1.0000);transform-origin:0 0;">server</div>
<div class="r" style="left:766.5px;top:440px;width:120.7px;height:14.5px;border:1px solid #a67250;border-radius:8px;box-sizing:border-box;background:#fff"></div>
<div class="t " style="left:775.60px;top:443.18px;font-size:7.7px;line-height:7.7px;color:#333333;transform:scaleX(1.0629);transform-origin:0 0;">app:recommendationservice</div>
<div class="r" style="left:209px;top:461px;width:713px;height:1px;background:#cccccc"></div>
<div class="r" style="left:209px;top:462px;width:713px;height:23px;background:#fafafa"></div>
<div class="t " style="left:632.80px;top:470.80px;font-size:7.8px;line-height:7.8px;color:#565656;transform:scaleX(1.0020);transform-origin:0 0;">Items per page</div>
<div class="t " style="left:701.20px;top:470.66px;font-size:8.2px;line-height:8.2px;color:#333333;letter-spacing:-0.5px">10</div>
<svg class="r" style="left:720px;top:472px;" width="7" height="5" viewBox="0 0 7 5"><path d="M0.8 0.8L3.5 3.5L6.2 0.8" fill="none" stroke="#999" stroke-width="0.8"/></svg>
<div class="r" style="left:695px;top:481px;width:36px;height:1px;background:#c8c8c8"></div>
<div class="t " style="left:745.70px;top:470.80px;font-size:7.8px;line-height:7.8px;color:#565656;transform:scaleX(0.9148);transform-origin:0 0;">1 - 10 of 12 items</div>
<svg class="r" style="left:818px;top:471px;" width="8" height="7" viewBox="0 0 8 7"><path d="M1 0.3V6.7M6.6 0.6L3.6 3.5L6.6 6.4" fill="none" stroke="#b8b8b8" stroke-width="1.2"/></svg>
<svg class="r" style="left:836px;top:471px;" width="6" height="7" viewBox="0 0 6 7"><path d="M4.6 0.6L1.6 3.5L4.6 6.4" fill="none" stroke="#b8b8b8" stroke-width="1.2"/></svg>
<div class="r" style="left:850.5px;top:466.5px;width:16px;height:15px;background:#fff;border:1px solid #cfcfcf;border-radius:2px;box-sizing:border-box"></div>
<div class="t " style="left:856.00px;top:471.00px;font-size:7.8px;line-height:7.8px;color:#333;">1</div>
<div class="t " style="left:868.20px;top:470.52px;font-size:8.6px;line-height:8.6px;color:#565656;transform:scaleX(1.1712);transform-origin:0 0;">/ 2</div>
<svg class="r" style="left:890px;top:471px;" width="6" height="7" viewBox="0 0 6 7"><path d="M1.4 0.6L4.4 3.5L1.4 6.4" fill="none" stroke="#555" stroke-width="1.2"/></svg>
<svg class="r" style="left:906px;top:471px;" width="8" height="7" viewBox="0 0 8 7"><path d="M1.2 0.6L4.2 3.5L1.2 6.4M6.6 0.3V6.7" fill="none" stroke="#555" stroke-width="1.2"/></svg>
<div class="r" style="left:923px;top:74px;width:13px;height:413px;background:#fafafa"></div>
<div class="r" style="left:806px;top:71px;width:102px;height:321px;background:#ffffff;border:1px solid #d9d9d9;border-radius:3px;box-sizing:border-box;box-shadow:0 1px 3px rgba(0,0,0,0.10)"></div>
<div class="t " style="left:814.60px;top:81.37px;font-size:8.3px;line-height:8.3px;color:#2b2b2b;font-weight:700;-webkit-text-stroke:0.15px #2b2b2b;transform:scaleX(0.9501);transform-origin:0 0;">Contexts</div>
<div class="r" style="left:806px;top:91px;width:102px;height:21px;border:1px solid #858585;box-sizing:border-box"></div>
<div class="t " style="left:819.80px;top:97.91px;font-size:9.2px;line-height:9.2px;color:#5e5e5e;letter-spacing:-0.357px;">10.150.165.128</div>
<div class="t " style="left:819.80px;top:117.39px;font-size:9.2px;line-height:9.2px;color:#5e5e5e;letter-spacing:-0.990px;">10.151.1.1</div>
<div class="t " style="left:819.80px;top:136.87px;font-size:9.2px;line-height:9.2px;color:#5e5e5e;letter-spacing:-0.239px;">10.151.2.200</div>
<div class="t " style="left:819.80px;top:156.35px;font-size:9.2px;line-height:9.2px;color:#5e5e5e;transform:scaleX(1.0734);transform-origin:0 0;">devops</div>
<div class="t " style="left:819.80px;top:175.83px;font-size:9.2px;line-height:9.2px;color:#5e5e5e;transform:scaleX(1.0290);transform-origin:0 0;">helm</div>
<div class="t " style="left:819.80px;top:195.31px;font-size:9.2px;line-height:9.2px;color:#5e5e5e;transform:scaleX(1.0839);transform-origin:0 0;">helm-gofigure</div>
<div class="t " style="left:819.80px;top:214.79px;font-size:9.2px;line-height:9.2px;color:#5e5e5e;transform:scaleX(1.1038);transform-origin:0 0;">prod</div>
<div class="t " style="left:819.80px;top:234.27px;font-size:9.2px;line-height:9.2px;color:#5e5e5e;letter-spacing:-0.311px;">prod-10.151.3.1</div>
<div class="t " style="left:819.80px;top:253.75px;font-size:9.2px;line-height:9.2px;color:#5e5e5e;transform:scaleX(1.0414);transform-origin:0 0;">tanzu</div>
<div class="t " style="left:819.80px;top:273.23px;font-size:9.2px;line-height:9.2px;color:#5e5e5e;transform:scaleX(1.0948);transform-origin:0 0;">test</div>
<div class="t " style="left:819.80px;top:292.71px;font-size:9.2px;line-height:9.2px;color:#5e5e5e;transform:scaleX(1.1018);transform-origin:0 0;">test-context</div>
<div class="r" style="left:807px;top:306px;width:100px;height:20px;background:#d8e3e9"></div>
<div class="t " style="left:819.80px;top:312.19px;font-size:9.2px;line-height:9.2px;color:#1f1f1f;letter-spacing:0.279px;">tkc-2-admin@tkc-2</div>
<div class="t " style="left:819.80px;top:331.67px;font-size:9.2px;line-height:9.2px;color:#5e5e5e;letter-spacing:0.274px;">tkg-01</div>
<div class="t " style="left:819.80px;top:351.15px;font-size:9.2px;line-height:9.2px;color:#5e5e5e;letter-spacing:0.654px;">tkg-03</div>
<div class="t " style="left:819.80px;top:370.63px;font-size:9.2px;line-height:9.2px;color:#5e5e5e;letter-spacing:0.511px;">tkg-03-test</div>
</body></html>
